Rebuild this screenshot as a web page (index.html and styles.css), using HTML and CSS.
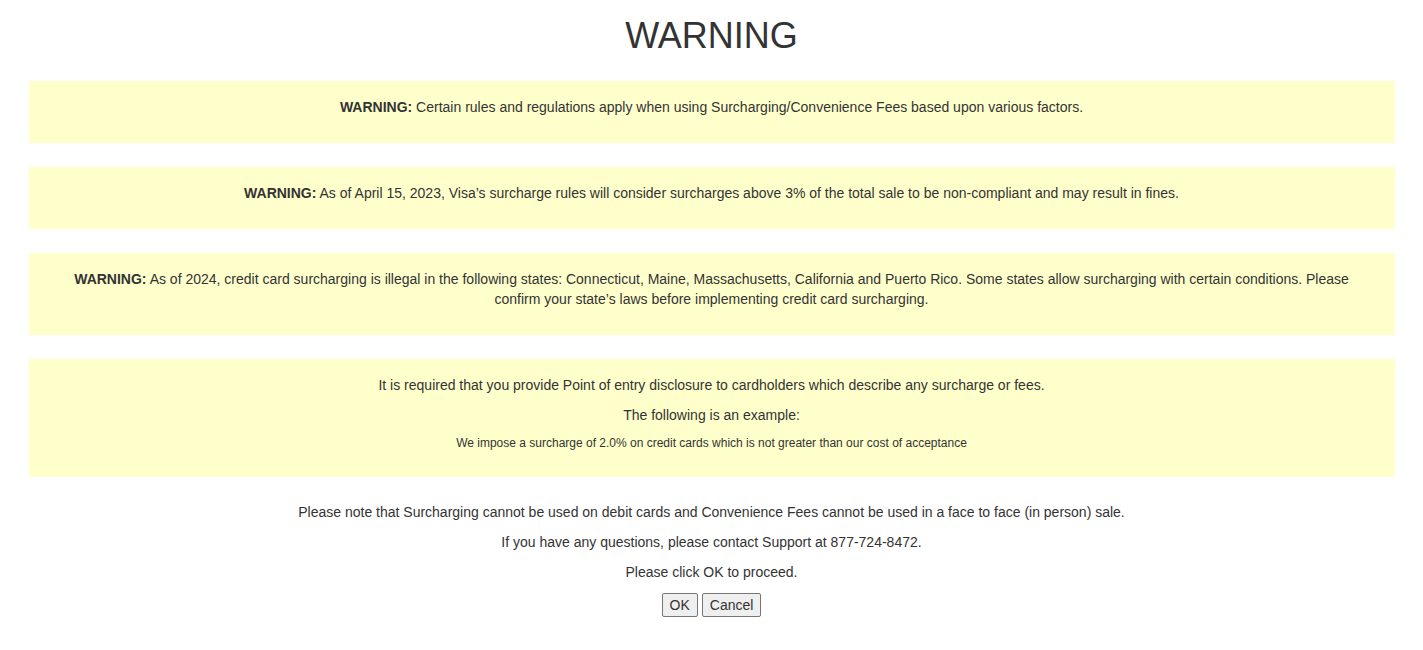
FILE: index.html
```html
<!DOCTYPE html>
<html lang="en">
<head>
<meta charset="utf-8">
<title>WARNING</title>
<link rel="stylesheet" href="styles.css">
</head>
<body>
<main class="page">
  <h1 class="title">WARNING</h1>

  <div class="notice">
    <p><strong>WARNING:</strong> Certain rules and regulations apply when using Surcharging/Convenience Fees based upon various factors.</p>
  </div>

  <div class="notice">
    <p><strong>WARNING:</strong> As of April 15, 2023, Visa’s surcharge rules will consider surcharges above 3% of the total sale to be non-compliant and may result in fines.</p>
  </div>

  <div class="notice">
    <p><strong>WARNING:</strong> As of 2024, credit card surcharging is illegal in the following states: Connecticut, Maine, Massachusetts, California and Puerto Rico. Some states allow surcharging with certain conditions. Please confirm your state’s laws before implementing credit card surcharging.</p>
  </div>

  <div class="notice">
    <p>It is required that you provide Point of entry disclosure to cardholders which describe any surcharge or fees.</p>
    <p>The following is an example:</p>
    <p class="example">We impose a surcharge of 2.0% on credit cards which is not greater than our cost of acceptance</p>
  </div>

  <div class="closing">
    <p>Please note that Surcharging cannot be used on debit cards and Convenience Fees cannot be used in a face to face (in person) sale.</p>
    <p>If you have any questions, please contact Support at 877-724-8472.</p>
    <p>Please click OK to proceed.</p>
    <div class="actions">
      <button type="button" class="btn">OK</button>
      <button type="button" class="btn">Cancel</button>
    </div>
  </div>
</main>
</body>
</html>
```

FILE: styles.css
```css
html, body {
  margin: 0;
  padding: 0;
  background: #ffffff;
}

body {
  font-family: "Liberation Sans", Arial, Helvetica, sans-serif;
  font-size: 14px;
  line-height: 20px;
  color: #333333;
}

.page {
  max-width: 1366px;
  margin: 0 auto;
  text-align: center;
}

.title {
  margin: 16px 0 25px;
  font-size: 36px;
  line-height: 40px;
  font-weight: 400;
  color: #333333;
}

p {
  margin: 0 0 10px;
}

.notice {
  background: #ffffcc;
  padding: 16px 30px 16px;
  margin-bottom: 24px;
}

.notice strong {
  font-weight: 700;
}

.example {
  font-size: 12px;
  line-height: 16px;
}

.closing {
  padding-top: 1px;
}

.actions {
  display: flex;
  justify-content: center;
  gap: 4px;
  padding-top: 1px;
}

.btn {
  font-family: "Liberation Sans", Arial, Helvetica, sans-serif;
  font-size: 14px;
  line-height: 16px;
  color: #333333;
  background: #efefef;
  border: 1px solid #767676;
  border-radius: 2px;
  padding: 3px 7px;
  margin: 0;
}
```
